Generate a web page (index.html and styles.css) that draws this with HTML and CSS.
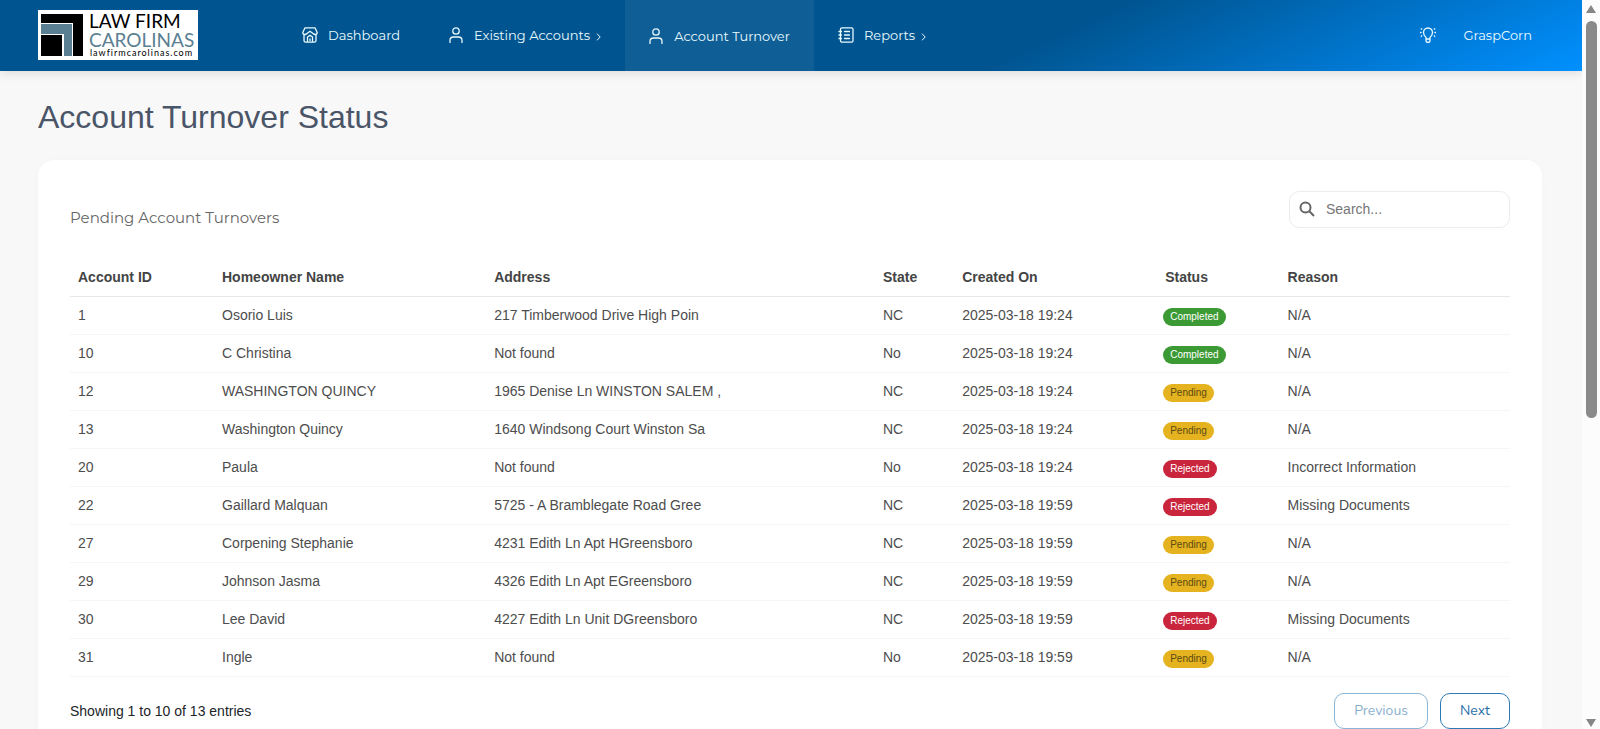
FILE: index.html
```html
<!DOCTYPE html>
<html lang="en">
<head>
<meta charset="UTF-8">
<meta name="viewport" content="width=device-width, initial-scale=1.0">
<title>Account Turnover Status</title>
<link rel="stylesheet" href="styles.css">
</head>
<body>
<div class="page">
  <header class="navbar">
    <a href="#" class="logo" aria-label="Law Firm Carolinas">
      <svg width="160" height="50" viewBox="0 0 160 50">
        <rect width="160" height="50" fill="#fff"/>
        <path d="M3 4h42v42H35V13H3z" fill="#000"/>
        <path d="M3 14h31v32h-8V24H3z" fill="#5b7f92"/>
        <rect x="3" y="25" width="21" height="21" fill="#000"/>
        <text x="51" y="18" class="logo-top">LAW FIRM</text>
        <text x="51" y="37" class="logo-mid">CAROLINAS</text>
        <text x="52" y="46" class="logo-url">lawfirmcarolinas.com</text>
      </svg>
    </a>
    <nav class="menu">
      <a href="#" class="menu-item">
        <svg class="icon" viewBox="0 0 16 16"><path d="M3 .8h10l2.200 4.700c0 1.200-.9 2-2.200 2-1 0-1.500-.5-2-1L8 4.300 5 6.500c-.5.500-1 1-2 1-1.300 0-2.200-.8-2.200-2zM2 7.500v6c0 1 .7 1.700 1.700 1.700h8.600c1 0 1.700-.7 1.700-1.700v-6M5.500 15v-5L8 8.200l2.500 1.800v5M8 12v1.500"/></svg>
        <span>Dashboard</span>
      </a>
      <a href="#" class="menu-item">
        <svg class="icon" viewBox="0 0 16 16"><circle cx="8" cy="4" r="3.200"/><path d="M2 15.500V13.500c0-2.200 1.500-3.500 3.500-3.500h5c2 0 3.500 1.300 3.500 3.500v2"/></svg>
        <span>Existing Accounts</span>
        <svg class="arrow" viewBox="0 0 5 8"><path d="M1 .7L4.200 4 1 7.300"/></svg>
      </a>
      <a href="#" class="menu-item active">
        <svg class="icon" viewBox="0 0 16 16"><circle cx="8" cy="4" r="3.200"/><path d="M2 15.500V13.500c0-2.200 1.500-3.500 3.500-3.500h5c2 0 3.500 1.300 3.500 3.500v2"/></svg>
        <span>Account Turnover</span>
      </a>
      <a href="#" class="menu-item">
        <svg class="icon" viewBox="0 0 16 16"><rect x="2.500" y=".8" width="12.500" height="14.400" rx="1.500"/><path d="M6.500 4.500h5M6.500 8h5M6.500 11.500h5M1 4.500h2.500M1 8h2.500M1 11.500h2.500"/></svg>
        <span>Reports</span>
        <svg class="arrow" viewBox="0 0 5 8"><path d="M1 .7L4.200 4 1 7.300"/></svg>
      </a>
    </nav>
    <div class="user">
      <button type="button" class="theme" aria-label="Toggle theme">
        <svg class="icon" viewBox="0 0 16 16"><path d="M6 12v-1.500C4.500 9 3.500 7.700 3.500 5.500a4.500 4.500 0 0 1 9 0c0 2.200-1 3.500-2.500 5V12zM6 12v1.500c0 1.200.8 2 2 2s2-.8 2-2V12M.5 5.500h.6M14.900 5.500h.6M1.200 1.800l.5.300M14.800 1.800l-.5.300M1.200 9.200l.5-.3M14.800 9.200l-.5-.3"/></svg>
      </button>
      <a href="#" class="user-name">GraspCorn</a>
    </div>
  </header>

  <main class="content">
    <h1>Account Turnover Status</h1>

    <section class="card">
      <div class="card-header">
        <h2>Pending Account Turnovers</h2>
        <label class="search">
          <svg viewBox="0 0 16 16"><circle cx="6.500" cy="6.500" r="5"/><path d="M10.300 10.300L15 15"/></svg>
          <input type="search" placeholder="Search..." aria-label="Search">
        </label>
      </div>

      <table class="turnovers">
        <colgroup>
          <col class="col-id"><col class="col-name"><col class="col-address"><col class="col-state"><col class="col-created"><col class="col-status"><col class="col-reason">
        </colgroup>
        <thead>
          <tr><th>Account ID</th><th>Homeowner Name</th><th>Address</th><th>State</th><th>Created On</th><th>Status</th><th>Reason</th></tr>
        </thead>
        <tbody>
          <tr><td>1</td><td>Osorio Luis</td><td>217 Timberwood Drive High Poin</td><td>NC</td><td>2025-03-18 19:24</td><td><span class="badge completed">Completed</span></td><td>N/A</td></tr>
          <tr><td>10</td><td>C Christina</td><td>Not found</td><td>No</td><td>2025-03-18 19:24</td><td><span class="badge completed">Completed</span></td><td>N/A</td></tr>
          <tr><td>12</td><td>WASHINGTON QUINCY</td><td>1965 Denise Ln WINSTON SALEM ,</td><td>NC</td><td>2025-03-18 19:24</td><td><span class="badge pending">Pending</span></td><td>N/A</td></tr>
          <tr><td>13</td><td>Washington Quincy</td><td>1640 Windsong Court Winston Sa</td><td>NC</td><td>2025-03-18 19:24</td><td><span class="badge pending">Pending</span></td><td>N/A</td></tr>
          <tr><td>20</td><td>Paula</td><td>Not found</td><td>No</td><td>2025-03-18 19:24</td><td><span class="badge rejected">Rejected</span></td><td>Incorrect Information</td></tr>
          <tr><td>22</td><td>Gaillard Malquan</td><td>5725 - A Bramblegate Road Gree</td><td>NC</td><td>2025-03-18 19:59</td><td><span class="badge rejected">Rejected</span></td><td>Missing Documents</td></tr>
          <tr><td>27</td><td>Corpening Stephanie</td><td>4231 Edith Ln Apt HGreensboro</td><td>NC</td><td>2025-03-18 19:59</td><td><span class="badge pending">Pending</span></td><td>N/A</td></tr>
          <tr><td>29</td><td>Johnson Jasma</td><td>4326 Edith Ln Apt EGreensboro</td><td>NC</td><td>2025-03-18 19:59</td><td><span class="badge pending">Pending</span></td><td>N/A</td></tr>
          <tr><td>30</td><td>Lee David</td><td>4227 Edith Ln Unit DGreensboro</td><td>NC</td><td>2025-03-18 19:59</td><td><span class="badge rejected">Rejected</span></td><td>Missing Documents</td></tr>
          <tr><td>31</td><td>Ingle</td><td>Not found</td><td>No</td><td>2025-03-18 19:59</td><td><span class="badge pending">Pending</span></td><td>N/A</td></tr>
        </tbody>
      </table>

      <div class="card-footer">
        <span>Showing 1 to 10 of 13 entries</span>
        <div class="pager">
          <button type="button" disabled>Previous</button>
          <button type="button">Next</button>
        </div>
      </div>
    </section>
  </main>
</div>

<div class="scrollbar" aria-hidden="true">
  <svg viewBox="0 0 12 10"><path d="M6 1l5 8H1z"/></svg>
  <div class="track"><div class="thumb"></div></div>
  <svg viewBox="0 0 12 10"><path d="M6 9l5-8H1z"/></svg>
</div>
</body>
</html>
```
FILE: styles.css
```css
* {
  box-sizing: border-box;
}

body {
  margin: 0;
  display: flex;
  height: 100vh;
  overflow: hidden;
  background: #f8f8f8;
  color: #212529;
  font-family: Arial, "Liberation Sans", sans-serif;
  font-size: 14px;
}

.page {
  flex: 1;
  min-width: 0;
  overflow: hidden;
}

/* navbar */
.navbar {
  display: flex;
  align-items: center;
  height: 71px;
  padding: 0 50px 2px 38px;
  background: linear-gradient(155deg, #00548f 65%, #0090ff 100%);
  box-shadow: 0 2px 10px rgba(0, 0, 0, 0.12);
  font-family: Montserrat, Inter, sans-serif;
  font-size: 13px;
}

.logo svg {
  display: block;
}

.logo-top,
.logo-mid {
  font-family: Lato, sans-serif;
  font-size: 19px;
}

.logo-mid {
  fill: #5b7f92;
}

.logo-url {
  font-family: Lato, sans-serif;
  font-size: 9px;
  letter-spacing: 1px;
}

.menu {
  display: flex;
  align-self: stretch;
  margin: 0 0 -2px 80px;
}

.menu-item {
  display: flex;
  align-items: center;
  padding: 0 24px 2px;
  color: #e9fbff;
  text-decoration: none;
}

.menu-item.active {
  padding: 0 24px 0 23px;
  background: rgba(255, 255, 255, 0.06);
}

.icon {
  width: 16px;
  height: 16px;
  fill: none;
  stroke: #e9fbff;
  stroke-width: 1.3;
  stroke-linecap: round;
  stroke-linejoin: round;
}

.menu-item .icon {
  margin-right: 10px;
}

.arrow {
  width: 5px;
  height: 8px;
  margin: 4px 0 0 6px;
  fill: none;
  stroke: #e9fbff;
}

.user {
  display: flex;
  align-items: center;
  gap: 27px;
  margin-left: auto;
}

.theme {
  display: flex;
  padding: 0;
  border: 0;
  background: none;
}

.user-name {
  color: #e9fbff;
  text-decoration: none;
}

/* content */
.content {
  padding: 26px 40px 26px 38px;
}

h1 {
  margin: 0 0 23px;
  color: #4a5568;
  font-size: 32px;
  font-weight: 400;
  line-height: 40px;
}

.card {
  padding: 31px 32px;
  background: #fff;
  border-radius: 16px;
  box-shadow: 0 0 8px rgba(0, 0, 0, 0.02);
}

.card-header {
  display: flex;
  justify-content: space-between;
  align-items: flex-start;
  margin-bottom: 31px;
}

h2 {
  margin: 17px 0 0;
  color: #666;
  font-family: Montserrat, Inter, sans-serif;
  font-size: 15px;
  font-weight: 400;
  line-height: 20px;
}

.search {
  display: flex;
  align-items: center;
  gap: 11px;
  width: 221px;
  height: 37px;
  padding: 0 9px 1px;
  border: 1px solid #ececee;
  border-radius: 10px;
}

.search svg {
  flex: none;
  width: 16px;
  height: 16px;
  fill: none;
  stroke: #666;
  stroke-width: 2;
}

.search input {
  flex: 1;
  min-width: 0;
  padding: 0;
  border: 0;
  outline: 0;
  background: none;
  font: inherit;
}

.search input::placeholder {
  color: #757575;
}

/* table */
.turnovers {
  width: 100%;
  table-layout: fixed;
  border-collapse: collapse;
  color: #4d4d4d;
}

.col-id { width: 10%; }
.col-name { width: 18.9%; }
.col-address { width: 27%; }
.col-state { width: 5.5%; }
.col-created { width: 14.1%; }
.col-status { width: 8.5%; }

.turnovers th,
.turnovers td {
  height: 38px;
  padding: 0 8px;
  border-bottom: 1px solid #f6f6f6;
  text-align: left;
  white-space: nowrap;
}

.turnovers th {
  height: 37px;
  border-bottom-color: #e6e6e6;
  color: #444;
}

.badge {
  display: inline-block;
  margin: 3px 0 0 -2px;
  padding: 0 7px;
  border-radius: 9px;
  font-size: 10px;
  line-height: 18px;
  vertical-align: middle;
}

.completed {
  background: #3c9a35;
  color: #fff;
}

.pending {
  background: #e5b31f;
  color: #5c4a14;
}

.rejected {
  background: #c9253c;
  color: #fff;
}

/* footer */
.card-footer {
  display: flex;
  justify-content: space-between;
  align-items: center;
  margin-top: 16px;
}

.pager {
  display: flex;
  gap: 12px;
}

.pager button {
  height: 36px;
  padding: 0 19px;
  border: 1px solid #2a7ab5;
  border-radius: 10px;
  background: #fff;
  color: #2a6fa8;
  font-family: Nunito, "Open Sans", sans-serif;
  font-size: 14px;
}

.pager button:disabled {
  opacity: 0.55;
}

/* scrollbar */
.scrollbar {
  display: flex;
  flex-direction: column;
  align-items: center;
  width: 18px;
  padding: 4px 0 1px;
  background: #fcfcfc;
}

.scrollbar svg {
  width: 12px;
  height: 10px;
  fill: #868686;
}

.track {
  flex: 1;
  padding-top: 7px;
}

.thumb {
  width: 11px;
  height: 57%;
  border-radius: 6px;
  background: #8a8a8a;
}
```
